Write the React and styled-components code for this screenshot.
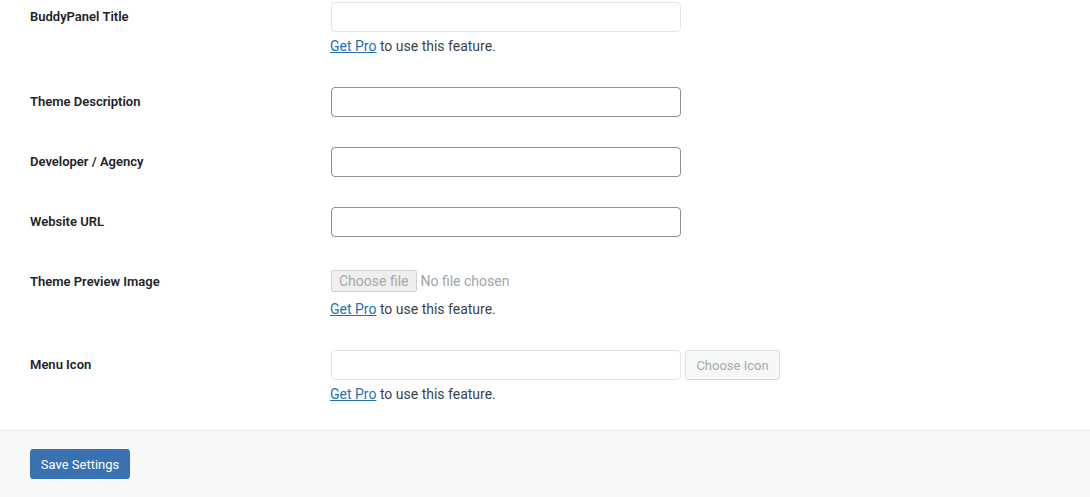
import React from "react";
import styled, { createGlobalStyle } from "styled-components";

const Global = createGlobalStyle`
  html, body { margin: 0; padding: 0; background: #fff; }
  body { font-family: Roboto, "Liberation Sans", sans-serif; color: #3c434a; font-size: 13px; }
  * { box-sizing: border-box; }
`;

const Page = styled.div`
  width: 1090px;
  height: 497px;
  overflow: hidden;
  background: #fff;
  display: flex;
  flex-direction: column;
`;

const Table = styled.div`
  display: flex;
  flex-direction: column;
  margin-top: -13px;
  padding-left: 30px;
  margin-bottom: 10px;
`;

const Row = styled.div`
  display: grid;
  grid-template-columns: 300px 1fr;
  padding: 15px 0;
`;

const Label = styled.div`
  padding-top: 6px;
  font-size: 13px;
  line-height: 17px;
  font-weight: 600;
  color: #1d2327;
`;

const Field = styled.div`
  display: flex;
  flex-direction: column;
  align-items: flex-start;
`;

const Inline = styled.div`
  display: flex;
  align-items: center;
  gap: 3px;
`;

const TextInput = styled.input`
  width: 350px;
  height: 30px;
  margin: 0 1px;
  padding: 0 8px;
  border-radius: 4px;
  font: 14px Roboto, sans-serif;
  background: #fff;
  border: 1px solid ${(p) => (p.disabled ? "#e2e4e7" : "#8c8f94")};
  outline: none;
`;

const Help = styled.p`
  margin: 4px 0 0;
  font-size: 14px;
  line-height: 21px;
  color: #3c434a;
`;

const ProLink = styled.a`
  color: #2271b1;
  text-decoration: underline;
`;

const FileControl = styled.div`
  height: 28px;
  margin-left: 1px;
  display: flex;
  align-items: center;
  gap: 4px;
  font-size: 14px;
  color: #a0a5aa;
`;

const FileButton = styled.span`
  height: 22px;
  padding: 0 7px;
  display: inline-flex;
  align-items: center;
  background: #efefef;
  border: 1px solid #d0d0d0;
  border-radius: 2px;
  color: #a8a8a8;
  font-size: 14px;
`;

const GhostButton = styled.button`
  width: 95px;
  height: 30px;
  padding: 0;
  margin: 0;
  font: 13px Roboto, sans-serif;
  color: #a7aaad;
  background: #f6f7f7;
  border: 1px solid #dcdcde;
  border-radius: 3px;
`;

const Footer = styled.div`
  flex: 1;
  background: #f8f8f8;
  border-top: 1px solid #ececec;
  padding: 18px 30px;
`;

const PrimaryButton = styled.button`
  width: 100px;
  height: 30px;
  margin: 0;
  padding: 0;
  font: 13px Roboto, sans-serif;
  color: #fff;
  background: #3872b2;
  border: 1px solid #3872b2;
  border-radius: 3px;
`;

const GetPro = () => (
  <Help>
    <ProLink href="#">Get Pro</ProLink> to use this feature.
  </Help>
);

export default function App() {
  return (
    <Page>
      <Global />
      <Table>
        <Row>
          <Label>BuddyPanel Title</Label>
          <Field>
            <TextInput disabled />
            <GetPro />
          </Field>
        </Row>
        <Row>
          <Label>Theme Description</Label>
          <Field>
            <TextInput />
          </Field>
        </Row>
        <Row>
          <Label>Developer / Agency</Label>
          <Field>
            <TextInput />
          </Field>
        </Row>
        <Row>
          <Label>Website URL</Label>
          <Field>
            <TextInput />
          </Field>
        </Row>
        <Row>
          <Label>Theme Preview Image</Label>
          <Field>
            <FileControl>
              <FileButton>Choose file</FileButton>
              No file chosen
            </FileControl>
            <GetPro />
          </Field>
        </Row>
        <Row>
          <Label>Menu Icon</Label>
          <Field>
            <Inline>
              <TextInput disabled />
              <GhostButton disabled>Choose Icon</GhostButton>
            </Inline>
            <GetPro />
          </Field>
        </Row>
      </Table>
      <Footer>
        <PrimaryButton>Save Settings</PrimaryButton>
      </Footer>
    </Page>
  );
}
